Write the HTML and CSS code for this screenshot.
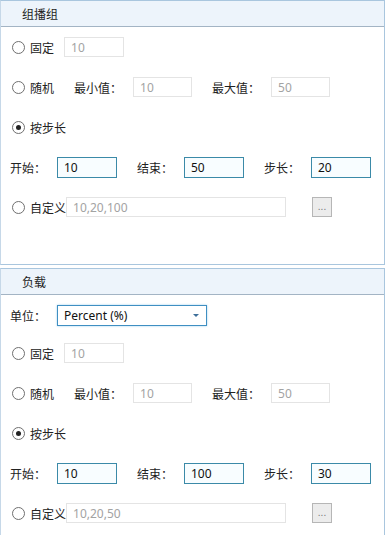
FILE: index.html
```html
<!DOCTYPE html>
<html lang="zh-CN">
<head>
    <meta charset="UTF-8">
    <title>组播组 / 负载</title>
    <link rel="stylesheet" href="styles.css">
</head>
<body>
    <div class="panel">
        <div class="panel-head">组播组</div>
        <div class="panel-body">
            <div class="row">
                <span class="radio"></span><span class="opt">固定</span>
                <input class="field off short" type="text" value="10" disabled>
            </div>
            <div class="row">
                <span class="radio"></span><span class="opt">随机</span>
                <span class="lbl-mm">最小值：</span>
                <input class="field off mm" type="text" value="10" disabled>
                <span class="lbl-mm">最大值：</span>
                <input class="field off mm" type="text" value="50" disabled>
            </div>
            <div class="row">
                <span class="radio checked"></span><span class="opt">按步长</span>
            </div>
            <div class="row step">
                <span class="lbl">开始：</span>
                <input class="field on" type="text" value="10">
                <span class="lbl">结束：</span>
                <input class="field on" type="text" value="50">
                <span class="lbl">步长：</span>
                <input class="field on" type="text" value="20">
            </div>
            <div class="row">
                <span class="radio"></span><span class="opt">自定义</span>
                <input class="field off wide" type="text" placeholder="10,20,100" disabled>
                <button class="more">...</button>
            </div>
        </div>
    </div>

    <div class="panel second">
        <div class="panel-head">负载</div>
        <div class="panel-body">
            <div class="row unit">
                <span class="lbl">单位：</span>
                <div class="select">
                    <span>Percent (%)</span>
                    <span class="caret"></span>
                </div>
            </div>
            <div class="row">
                <span class="radio"></span><span class="opt">固定</span>
                <input class="field off short" type="text" value="10" disabled>
            </div>
            <div class="row">
                <span class="radio"></span><span class="opt">随机</span>
                <span class="lbl-mm">最小值：</span>
                <input class="field off mm" type="text" value="10" disabled>
                <span class="lbl-mm">最大值：</span>
                <input class="field off mm" type="text" value="50" disabled>
            </div>
            <div class="row">
                <span class="radio checked"></span><span class="opt">按步长</span>
            </div>
            <div class="row step">
                <span class="lbl">开始：</span>
                <input class="field on" type="text" value="10">
                <span class="lbl">结束：</span>
                <input class="field on" type="text" value="100">
                <span class="lbl">步长：</span>
                <input class="field on" type="text" value="30">
            </div>
            <div class="row">
                <span class="radio"></span><span class="opt">自定义</span>
                <input class="field off wide" type="text" placeholder="10,20,50" disabled>
                <button class="more">...</button>
            </div>
        </div>
    </div>
</body>
</html>
```

FILE: styles.css
```css
body {
    margin: 0;
    padding: 0;
    background: #ffffff;
    font-family: "Noto Sans CJK SC", "Noto Sans", sans-serif;
    font-size: 12px;
    color: #222;
    width: 386px;
    overflow: hidden;
}

.panel {
    border: 1px solid #a9c6de;
    border-left-color: #c6d8e8;
    width: 383px;
    height: 263px;
    background: #fff;
}

.panel.second {
    margin-top: 3px;
    height: 280px;
}

.panel-head {
    height: 25px;
    line-height: 25px;
    padding-left: 21px;
    background: #edf4fb;
    border-bottom: 1px solid #a3b4c4;
    color: #1e1e1e;
}

.row {
    height: 40px;
    display: flex;
    align-items: center;
    padding-left: 11px;
    white-space: nowrap;
}

.row.step,
.row.unit {
    padding-left: 9px;
}

.row.unit {
    height: 36px;
    margin-top: 2px;
}

.radio {
    flex: none;
    width: 11px;
    height: 11px;
    border: 1px solid #6f6f6f;
    border-radius: 50%;
    background: #fff;
    position: relative;
    box-sizing: content-box;
}

.radio.checked::after {
    content: "";
    position: absolute;
    left: 3px;
    top: 3px;
    width: 5px;
    height: 5px;
    border-radius: 50%;
    background: #222;
}

.opt {
    flex: none;
    margin-left: 5px;
}

.lbl {
    flex: none;
    width: 47px;
}

.lbl-mm {
    flex: none;
    margin-left: 20px;
    width: 59px;
}

.field {
    flex: none;
    box-sizing: border-box;
    height: 20px;
    padding: 0 6px;
    font-family: "Noto Sans", "Noto Sans CJK SC", sans-serif;
    font-size: 12px;
    outline: none;
}

.field.off {
    border: 1px solid #e4e4e4;
    background: #fff;
    color: #a3a3a3;
}

.field.off::placeholder {
    color: #a3a3a3;
}

.field.short {
    margin-left: 10px;
    width: 60px;
}

.field.mm {
    width: 59px;
}

.field.wide {
    width: 220px;
}

.field.on {
    width: 60px;
    height: 21px;
    border: 1px solid #3b8aa8;
    background: #f8fdff;
    color: #111;
    margin-right: 20px;
}

.more {
    flex: none;
    margin-left: 26px;
    width: 20px;
    height: 20px;
    padding: 0;
    border: 1px solid #b6b6b6;
    background: #ececec;
    color: #777;
    font-size: 10px;
    line-height: 14px;
}

.select {
    box-sizing: border-box;
    width: 150px;
    height: 21px;
    border: 1px solid #3f8fc2;
    box-shadow: 0 0 2px #9fd0ee;
    background: #fff;
    display: flex;
    align-items: center;
    justify-content: space-between;
    padding: 0 7px 0 6px;
    font-family: "Noto Sans", "Noto Sans CJK SC", sans-serif;
    color: #111;
}

.caret {
    width: 0;
    height: 0;
    border-left: 3px solid transparent;
    border-right: 3px solid transparent;
    border-top: 3px solid #3d6f9a;
}
```
